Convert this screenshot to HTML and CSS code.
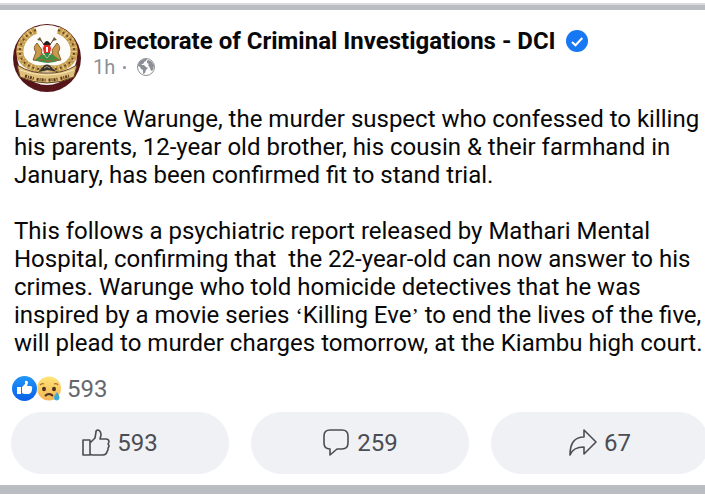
FILE: index.html
```html
<!DOCTYPE html>
<html lang="en">
<head>
<meta charset="utf-8">
<meta name="viewport" content="width=device-width, initial-scale=1">
<title>Directorate of Criminal Investigations - DCI</title>
<link rel="stylesheet" href="styles.css">
</head>
<body>
<article class="post">
  <header class="post-header">
    <svg class="avatar" viewBox="0 0 70 70" aria-hidden="true">
      <circle cx="35" cy="35" r="34" fill="#561619"/>
      <circle cx="35" cy="32" r="30" fill="#fdfcf8"/>
      <g fill="none">
        <path d="M24 7C7 14 3 32 14 41Q24 48 34 45M46 7C63 14 67 32 56 41Q46 48 36 45" stroke="#c49c4e" stroke-width="7"/>
        <path d="M24 7C7 14 3 32 14 41Q24 48 34 45M46 7C63 14 67 32 56 41Q46 48 36 45" stroke="#ead18d" stroke-width="6" stroke-dasharray="1 3"/>
        <path d="M24 7C7 14 3 32 14 41Q24 48 34 45M46 7C63 14 67 32 56 41Q46 48 36 45" stroke="#6b4a20" stroke-width="2" stroke-dasharray="2 3"/>
      </g>
      <path d="M5 42Q20 51 35 50Q50 51 65 42L62 54Q35 66 8 54Z" fill="#dfc07a" stroke="#65421d"/>
      <path d="M8 47Q35 57 62 47" fill="none" stroke="#f6e8bf" stroke-width="1"/>
      <path d="M13 53Q35 61 57 53" fill="none" stroke="#5b3719" stroke-width="3" stroke-dasharray="2 1 1 1 2 1 1 3"/>
      <path d="M27 15 44 37M43 15 26 37" stroke="#594832" stroke-width="1"/>
      <path d="M25 17l3-3 2 4zM45 17l-3-3-2 4z" fill="#6d5938"/>
      <path d="M25 20Q20 25 24 29L21 37 28 38 30 27ZM45 20Q50 25 46 29L49 37 42 38 40 27Z" fill="#c99a4c" stroke="#856130"/>
      <path d="M23 37Q35 25 48 37Q36 43 23 37" fill="#418f42"/>
      <path d="M35 18Q26 25 35 35Q44 25 35 18" fill="#e12b25" stroke="#f2eadb"/>
      <path d="M31 22Q35 14 39 22Z" fill="#241e1b"/>
      <path d="M32 30h6l-3 5z" fill="#238c46"/>
      <path d="M34 24h2v5h-2z" fill="#fff"/>
      <path d="M27 37h4m3 1h5m3-1h3" stroke="#e24834" stroke-width="1"/>
      <path d="M29 46Q35 37 41 46L46 49 36 47 26 49Z" fill="#343331"/>
      <path d="M32 45q3-3 6 0" fill="none" stroke="#b69861"/>
    </svg>
    <div class="identity">
      <h1 class="page-name">Directorate of Criminal Investigations - DCI
        <svg class="verified" viewBox="0 0 22 22" role="img" aria-label="Verified"><circle cx="11" cy="11" r="11" fill="#1877f2"/><path d="M6 12l3.500 3.300L16.300 8" fill="none" stroke="#fff" stroke-width="2"/></svg>
      </h1>
      <div class="meta"><span>1h</span><span class="dot"></span>
        <svg class="globe" viewBox="0 0 18 18" role="img" aria-label="Public"><circle cx="9" cy="9" r="8.500" fill="#fff" stroke="#8c9096"/><path d="M1 8Q1 3 7 1L10 1 9 3 7 4 7 5 4 7 7 7 9 9 11 10 9 12 8 15 6 16 6 12 4 11 3 9ZM11 2l3 1 3 4-1 5-2 1-1-3-2-3 1-1-2-1 0-2Z" fill="#8c9096"/></svg>
      </div>
    </div>
  </header>
  <div class="message">
    <p>Lawrence Warunge, the murder suspect who confessed to killing<br>his parents, 12-year old brother, his cousin &amp; their farmhand in<br>January, has been confirmed fit to stand trial.</p>
    <p>This follows a psychiatric report released by Mathari Mental<br>Hospital, confirming that&nbsp; the 22-year-old can now answer to his<br>crimes. Warunge who told homicide detectives that he was<br>inspired by a movie series <span class="quote">‘</span>Killing Eve<span class="quote">’</span> to end the lives of the five,<br>will plead to murder charges tomorrow, at the Kiambu high court.</p>
  </div>
  <div class="reactions">
    <svg class="reaction-icons" viewBox="0 0 50 26" aria-hidden="true">
      <defs>
        <linearGradient id="blue" x2="0" y2="1"><stop stop-color="#2196f8"/><stop offset="1" stop-color="#0860e8"/></linearGradient>
        <linearGradient id="yellow" x2="0" y2="1"><stop stop-color="#ffe477"/><stop offset="1" stop-color="#f5b554"/></linearGradient>
      </defs>
      <circle cx="37" cy="12.500" r="12" fill="url(#yellow)"/>
      <ellipse cx="32" cy="13" rx="2" ry="2.300" fill="#493124"/><ellipse cx="42" cy="13" rx="2" ry="2.300" fill="#493124"/>
      <path d="M28 9q2-2 4-1M42 8q3-1 4 1" fill="none" stroke="#a36b2d" stroke-width="1.200"/>
      <path d="M33 20q4-4 8 0" fill="none" stroke="#493124" stroke-width="2"/>
      <path d="M45 16q-6 8 0 8.500q5-1 0-8.500" fill="#36aad8"/>
      <circle cx="12.500" cy="12.500" r="13" fill="#fff"/><circle cx="12.500" cy="12.500" r="12.500" fill="url(#blue)"/>
      <path d="M5 11h4v7H5zM10 11l3-3V5q3-1 3 2l-1 3h4q2 1 1 3 0 4-3 5h-5l-2-1z" fill="#fff"/>
    </svg>
    <span>593</span>
  </div>
  <div class="actions">
    <button class="action" type="button" aria-label="Like, 593">
      <svg class="icon" viewBox="0 0 28 28" aria-hidden="true"><path d="M1 11h7v15H1zM8 14l5-5 1-6q0-2 2-2 3 1 3 5l-1 4h6q3 0 3 3l-1 2q2 2 0 4v2q-1 1-1 2-1 3-4 3H11q-2 0-3-1"/></svg><span>593</span>
    </button>
    <button class="action" type="button" aria-label="Comment, 259">
      <svg class="icon" viewBox="0 0 28 28" aria-hidden="true"><path d="M8 1h12q6 0 6 6v7q0 6-6 6h-5l-7 6v-6q-6 0-6-6V7q0-6 6-6Z"/></svg><span>259</span>
    </button>
    <button class="action" type="button" aria-label="Share, 67">
      <svg class="icon" viewBox="0 0 28 28" aria-hidden="true"><path d="M15 1l12 12-12 12v-7Q4 18 1 26 1 8 15 8Z"/></svg><span>67</span>
    </button>
  </div>
</article>
</body>
</html>
```
FILE: styles.css
```css
* { box-sizing: border-box; }
body {
  margin: 0;
  padding-top: 3px;
  overflow: hidden;
  background: #fff;
  color: #080809;
  font-family: Roboto, "Liberation Sans", sans-serif;
}
.post {
  margin-top: 2px;
  border-top: 5px solid #babec2;
  border-bottom: 9px solid #babec2;
  box-shadow: 0 0 0 2px #d8dadb;
}
.post-header {
  display: flex;
  gap: 11px;
  padding: 13px 12px 0;
}
.avatar { width: 70px; height: 70px; flex: none; }
.identity { padding-top: 4px; }
.page-name {
  display: flex;
  align-items: center;
  gap: 10px;
  margin: 0;
  font-size: 24px;
  line-height: 28px;
  font-weight: 700;
  white-space: nowrap;
}
.verified { width: 22px; height: 22px; }
.meta {
  display: flex;
  align-items: center;
  color: #8c9096;
  font-size: 20px;
  line-height: 24px;
}
.dot { width: 3px; height: 3px; margin: 0 11px 0 8px; border-radius: 50%; background: #8c9096; }
.globe { width: 18px; height: 18px; }
.message {
  padding: 12px 0 0 14px;
  font-size: 24px;
  line-height: 28px;
  white-space: nowrap;
}
.message p { margin: 0 0 28px; }
.message p:last-child { margin: 0; }
.quote { font-family: "Liberation Serif", serif; font-size: 22px; line-height: 24px; }
.reactions {
  display: flex;
  align-items: center;
  gap: 5px;
  padding: 18px 12px 9px;
  color: #65676b;
  font-size: 24px;
  line-height: 28px;
}
.reaction-icons { width: 50px; height: 26px; }
.actions {
  display: grid;
  grid-template-columns: repeat(3, 1fr);
  gap: 22px;
  margin: 0 -4px 11px 11px;
}
.action {
  display: flex;
  align-items: center;
  justify-content: center;
  gap: 7px;
  padding: 17px 0;
  border: 0;
  border-radius: 31px;
  background: #f0f1f5;
  color: #4b4d52;
  font: inherit;
  font-size: 24px;
  line-height: 28px;
}
.icon {
  width: 28px;
  height: 28px;
  fill: none;
  stroke: #4b4d52;
  stroke-width: 1.6;
  stroke-linejoin: round;
}
```
